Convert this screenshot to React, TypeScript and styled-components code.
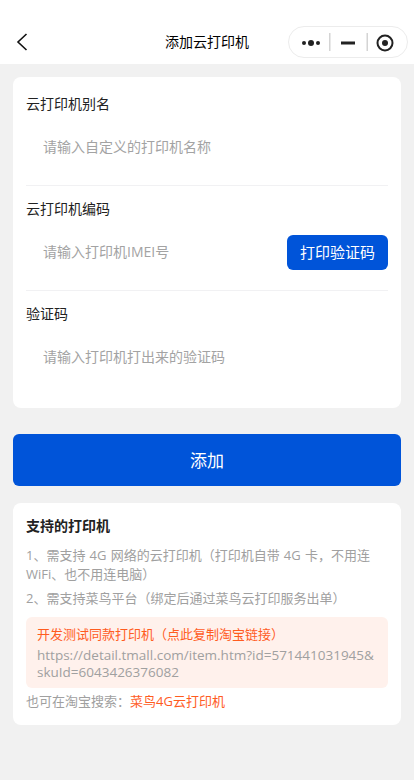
import styled, { createGlobalStyle } from "styled-components";

const GlobalStyle = createGlobalStyle`
	* {
		box-sizing: border-box;
	}
	html,
	body {
		margin: 0;
		padding: 0;
		background: #f1f1f1;
		font-family: "Open Sans", "Noto Sans CJK SC", sans-serif;
		font-size: 14px;
		color: #222;
	}
`;

const Page = styled.div`
	width: 414px;
	height: 780px;
	overflow: hidden;
	background: #f1f1f1;
`;

const NavBar = styled.header`
	height: 64px;
	padding: 26px 0 6px;
	background: #fff;
	display: grid;
	grid-template-columns: 1fr auto 1fr;
	align-items: center;
`;

const BackButton = styled.button`
	width: 32px;
	height: 32px;
	margin-left: 6px;
	padding: 0;
	border: 0;
	background: none;
	display: flex;
	align-items: center;
	justify-content: center;
`;

const NavTitle = styled.h1`
	margin: 0;
	font-size: 14px;
	font-weight: 400;
	line-height: 20px;
	color: #000;
`;

const Capsule = styled.div`
	justify-self: end;
	width: 120px;
	height: 32px;
	margin-right: 6px;
	border: 1px solid #ececec;
	border-radius: 16px;
	background: #fff;
`;

const Content = styled.main`
	padding: 13px 13px 0;
`;

const Card = styled.section`
	background: #fff;
	border-radius: 8px;
	padding: 4px 13px 13px;
`;

const Field = styled.div`
	padding: 13px 0 20px;
	border-bottom: 1px solid #f1f1f3;

	&:last-child {
		border-bottom: 0;
	}
`;

const FieldLabel = styled.label`
	display: block;
	font-size: 14px;
	line-height: 20px;
	color: #222;
	margin-bottom: 16px;
`;

const FieldRow = styled.div`
	height: 35px;
	display: flex;
	align-items: center;
`;

const FieldInput = styled.input`
	flex: 1;
	min-width: 0;
	height: 100%;
	padding: 0 0 2px 17px;
	border: 0;
	outline: 0;
	background: none;
	font: inherit;
	font-size: 14px;

	&::placeholder {
		color: #a3a3a3;
		opacity: 1;
	}
`;

const CodeButton = styled.button`
	width: 101px;
	height: 35px;
	padding: 0 0 2px;
	border: 0;
	border-radius: 6px;
	background: #0054d9;
	color: #fff;
	font: inherit;
	font-size: 15px;
`;

const SubmitButton = styled.button`
	display: block;
	width: 100%;
	height: 52px;
	margin-top: 26px;
	padding: 0 0 2px;
	border: 0;
	border-radius: 6px;
	background: #0054d9;
	color: #fff;
	font: inherit;
	font-size: 17px;
`;

const InfoCard = styled.section`
	margin-top: 17px;
	height: 222px;
	padding: 13px;
	background: #fff;
	border-radius: 8px;
`;

const InfoTitle = styled.h2`
	margin: 0 0 10px;
	font-size: 14px;
	font-weight: 700;
	line-height: 20px;
	color: #222;
`;

const InfoText = styled.p`
	margin: 0 0 5px;
	font-size: 13px;
	line-height: 19px;
	word-spacing: 0.8px;
	color: #a0a0a0;
`;

const Notice = styled.div`
	margin: 9px 0 4px;
	height: 71px;
	padding: 7px 11px;
	border-radius: 6px;
	background: #fff1ec;
`;

const NoticeTitle = styled.div`
	font-size: 13px;
	line-height: 20px;
	color: #ff5c1f;
`;

const NoticeLink = styled.div`
	margin-top: 3px;
	font-size: 13.5px;
	line-height: 17px;
	color: #a0a0a0;
`;

const Highlight = styled.span`
	color: #ff5c1f;
`;

const BackIcon = () => (
	<svg width="12" height="18" viewBox="0 0 12 18" fill="none">
		<path d="M10.5 1 L2 9 L10.5 17" stroke="#111" strokeWidth="1.6" />
	</svg>
);

const CapsuleIcons = () => (
	<svg width="118" height="30" viewBox="0 0 118 30" style={{ display: "block" }}>
		<circle cx="15" cy="16" r="2" fill="#222" />
		<circle cx="22" cy="16" r="3" fill="#222" />
		<circle cx="29" cy="16" r="2" fill="#222" />
		<rect x="40" y="6" width="1.5" height="18" fill="#d4d4d4" />
		<rect x="52" y="14.5" width="14" height="3" fill="#222" />
		<rect x="77.5" y="6" width="1.5" height="18" fill="#d4d4d4" />
		<circle cx="96" cy="16" r="7.5" fill="none" stroke="#222" strokeWidth="2" />
		<circle cx="96" cy="16" r="3" fill="#222" />
	</svg>
);

export default function App() {
	return (
		<Page>
			<GlobalStyle />
			<NavBar>
				<BackButton aria-label="返回">
					<BackIcon />
				</BackButton>
				<NavTitle>添加云打印机</NavTitle>
				<Capsule>
					<CapsuleIcons />
				</Capsule>
			</NavBar>
			<Content>
				<Card>
					<Field>
						<FieldLabel>云打印机别名</FieldLabel>
						<FieldRow>
							<FieldInput placeholder="请输入自定义的打印机名称" />
						</FieldRow>
					</Field>
					<Field>
						<FieldLabel>云打印机编码</FieldLabel>
						<FieldRow>
							<FieldInput placeholder="请输入打印机IMEI号" />
							<CodeButton>打印验证码</CodeButton>
						</FieldRow>
					</Field>
					<Field>
						<FieldLabel>验证码</FieldLabel>
						<FieldRow>
							<FieldInput placeholder="请输入打印机打出来的验证码" />
						</FieldRow>
					</Field>
				</Card>
				<SubmitButton>添加</SubmitButton>
				<InfoCard>
					<InfoTitle>支持的打印机</InfoTitle>
					<InfoText>1、需支持 4G 网络的云打印机（打印机自带 4G 卡，不用连 WiFi、也不用连电脑）</InfoText>
					<InfoText>2、需支持菜鸟平台（绑定后通过菜鸟云打印服务出单）</InfoText>
					<Notice>
						<NoticeTitle>开发测试同款打印机（点此复制淘宝链接）</NoticeTitle>
						<NoticeLink>
							https://detail.tmall.com/item.htm?id=571441031945&amp;
							<br />
							skuId=6043426376082
						</NoticeLink>
					</Notice>
					<InfoText>
						也可在淘宝搜索：<Highlight>菜鸟4G云打印机</Highlight>
					</InfoText>
				</InfoCard>
			</Content>
		</Page>
	);
}
